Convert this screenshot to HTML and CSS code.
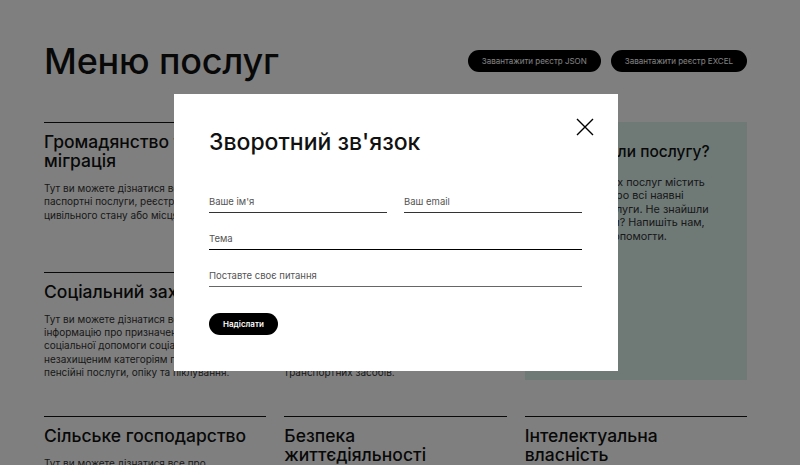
FILE: index.html
```html
<!DOCTYPE html>
<html lang="uk">
<head>
    <meta charset="UTF-8">
    <meta name="viewport" content="width=device-width, initial-scale=1.0">
    <title>Меню послуг</title>
    <link rel="stylesheet" href="styles.css">
</head>
<body>
    <div class="page">
        <header class="top">
            <h1>Меню послуг</h1>
            <div class="downloads">
                <button class="pill">Завантажити реєстр JSON</button>
                <button class="pill">Завантажити реєстр EXCEL</button>
            </div>
        </header>

        <main class="services">
            <div class="card">
                <h2>Громадянство та міграція</h2>
                <p>Тут ви можете дізнатися все про паспортні послуги, реєстрацію актів цивільного стану або місця проживання.</p>
            </div>
            <div class="card">
                <h2>Бізнес та підприємництво</h2>
                <p>Тут ви можете дізнатися все про реєстрацію ФОП, ліцензії, дозволи, податкову звітність та державну допомогу для малого бізнесу.</p>
            </div>
            <div class="help">
                <h3>Не знайшли послугу?</h3>
                <p>Каталог наших послуг містить інформацію про всі наявні державні послуги. Не знайшли те, що шукали? Напишіть нам, спробуємо допомогти.</p>
            </div>
            <div class="card">
                <h2>Соціальний захист</h2>
                <p>Тут ви можете дізнатися все про пільги, інформацію про призначення та виплату соціальної допомоги соціально незахищеним категоріям громадян, пенсійні послуги, опіку та піклування.</p>
            </div>
            <div class="card">
                <h2>Транспорт</h2>
                <p>Тут ви можете дізнатися все про отримання посвідчення водія, технічний огляд, сплату штрафів, а також про реєстрацію, перереєстрацію та облік транспортних засобів.</p>
            </div>
            <div class="card">
                <h2>Сільське господарство</h2>
                <p>Тут ви можете дізнатися все про земельні ділянки, субсидії для фермерів та реєстрацію техніки.</p>
            </div>
            <div class="card">
                <h2>Безпека життєдіяльності</h2>
                <p>Тут ви можете дізнатися все про пожежну безпеку та надзвичайні ситуації.</p>
            </div>
            <div class="card">
                <h2>Інтелектуальна власність</h2>
                <p>Тут ви можете дізнатися все про авторське право, патенти та торговельні марки.</p>
            </div>
        </main>
    </div>

    <div class="overlay">
        <div class="modal">
            <button class="close" aria-label="Закрити">
                <svg width="18" height="18" viewBox="0 0 18 18"><path d="M1 1 L17 17 M17 1 L1 17" stroke="#000" stroke-width="1.4" fill="none"/></svg>
            </button>
            <h2 class="modal-title">Зворотний зв'язок</h2>
            <form class="feedback">
                <div class="pair">
                    <input type="text" class="field" placeholder="Ваше ім'я">
                    <input type="email" class="field" placeholder="Ваш email">
                </div>
                <input type="text" class="field black" placeholder="Тема">
                <input type="text" class="field grey" placeholder="Поставте своє питання">
                <button type="button" class="send">Надіслати</button>
            </form>
        </div>
    </div>
</body>
</html>
```

FILE: styles.css
```css
* {
    box-sizing: border-box;
}
body {
    margin: 0;
    background-color: #fff;
    color: #222;
    font-family: Inter, "Noto Sans", sans-serif;
    overflow: hidden;
}
.page {
    padding: 40px 53px 0 44px;
}
.top {
    display: flex;
    align-items: center;
    justify-content: space-between;
    height: 41px;
}
.top h1 {
    margin: 0;
    font-size: 36px;
    font-weight: 500;
    letter-spacing: -0.2px;
    color: #111;
}
.downloads {
    display: flex;
    gap: 10px;
}
.pill {
    height: 22px;
    padding: 0 14px;
    border: none;
    border-radius: 11px;
    background-color: #000;
    color: #fff;
    font-family: Inter, sans-serif;
    font-size: 8px;
}
.services {
    margin-top: 41px;
    display: grid;
    grid-template-columns: repeat(3, 1fr);
    column-gap: 18px;
    row-gap: 36px;
}
.card {
    border-top: 1.5px solid #111;
    padding: 9px 17px 0 0;
}
.card h2 {
    margin: 0 0 12px;
    font-size: 17.5px;
    line-height: 19px;
    font-weight: 500;
    color: #111;
}
.card p, .help p {
    margin: 0;
    font-size: 10px;
    line-height: 13.4px;
    color: #333;
}
.help {
    grid-column: 3;
    grid-row: 1 / span 2;
    background-color: #def4ee;
    padding: 20px 24px 20px 20px;
}
.help h3 {
    margin: 0 0 15px;
    font-size: 15.5px;
    line-height: 19px;
    font-weight: 500;
    color: #111;
}
.help p {
    font-size: 10.8px;
}
.overlay {
    position: fixed;
    inset: 0;
    background-color: rgba(0, 0, 0, 0.5);
    display: flex;
    align-items: center;
    justify-content: center;
    padding-right: 8px;
}
.modal {
    position: relative;
    width: 444px;
    height: 277px;
    background-color: #fff;
    padding: 35px 36px 35px 35px;
}
.close {
    position: absolute;
    top: 24px;
    right: 24px;
    padding: 0;
    border: none;
    background: none;
    line-height: 0;
    cursor: pointer;
}
.modal-title {
    margin: 0 0 32px;
    font-size: 23px;
    line-height: 27px;
    font-weight: 500;
    color: #111;
}
.feedback {
    display: flex;
    flex-direction: column;
    gap: 12px;
}
.pair {
    display: flex;
    gap: 17px;
}
.field {
    width: 100%;
    height: 25px;
    padding: 3px 0 0;
    border: none;
    border-bottom: 1.5px solid #333;
    font-family: Inter, sans-serif;
    font-size: 9.5px;
    line-height: 13px;
    outline: none;
}
.field::placeholder {
    color: #555;
}
.field.black {
    border-bottom-color: #000;
}
.field.grey {
    border-bottom-color: #666;
}
.send {
    align-self: flex-start;
    margin-top: 14px;
    height: 22px;
    padding: 0 14px;
    border: none;
    border-radius: 11px;
    background-color: #000;
    color: #fff;
    font-family: Inter, sans-serif;
    font-size: 8px;
    font-weight: 600;
}
```
